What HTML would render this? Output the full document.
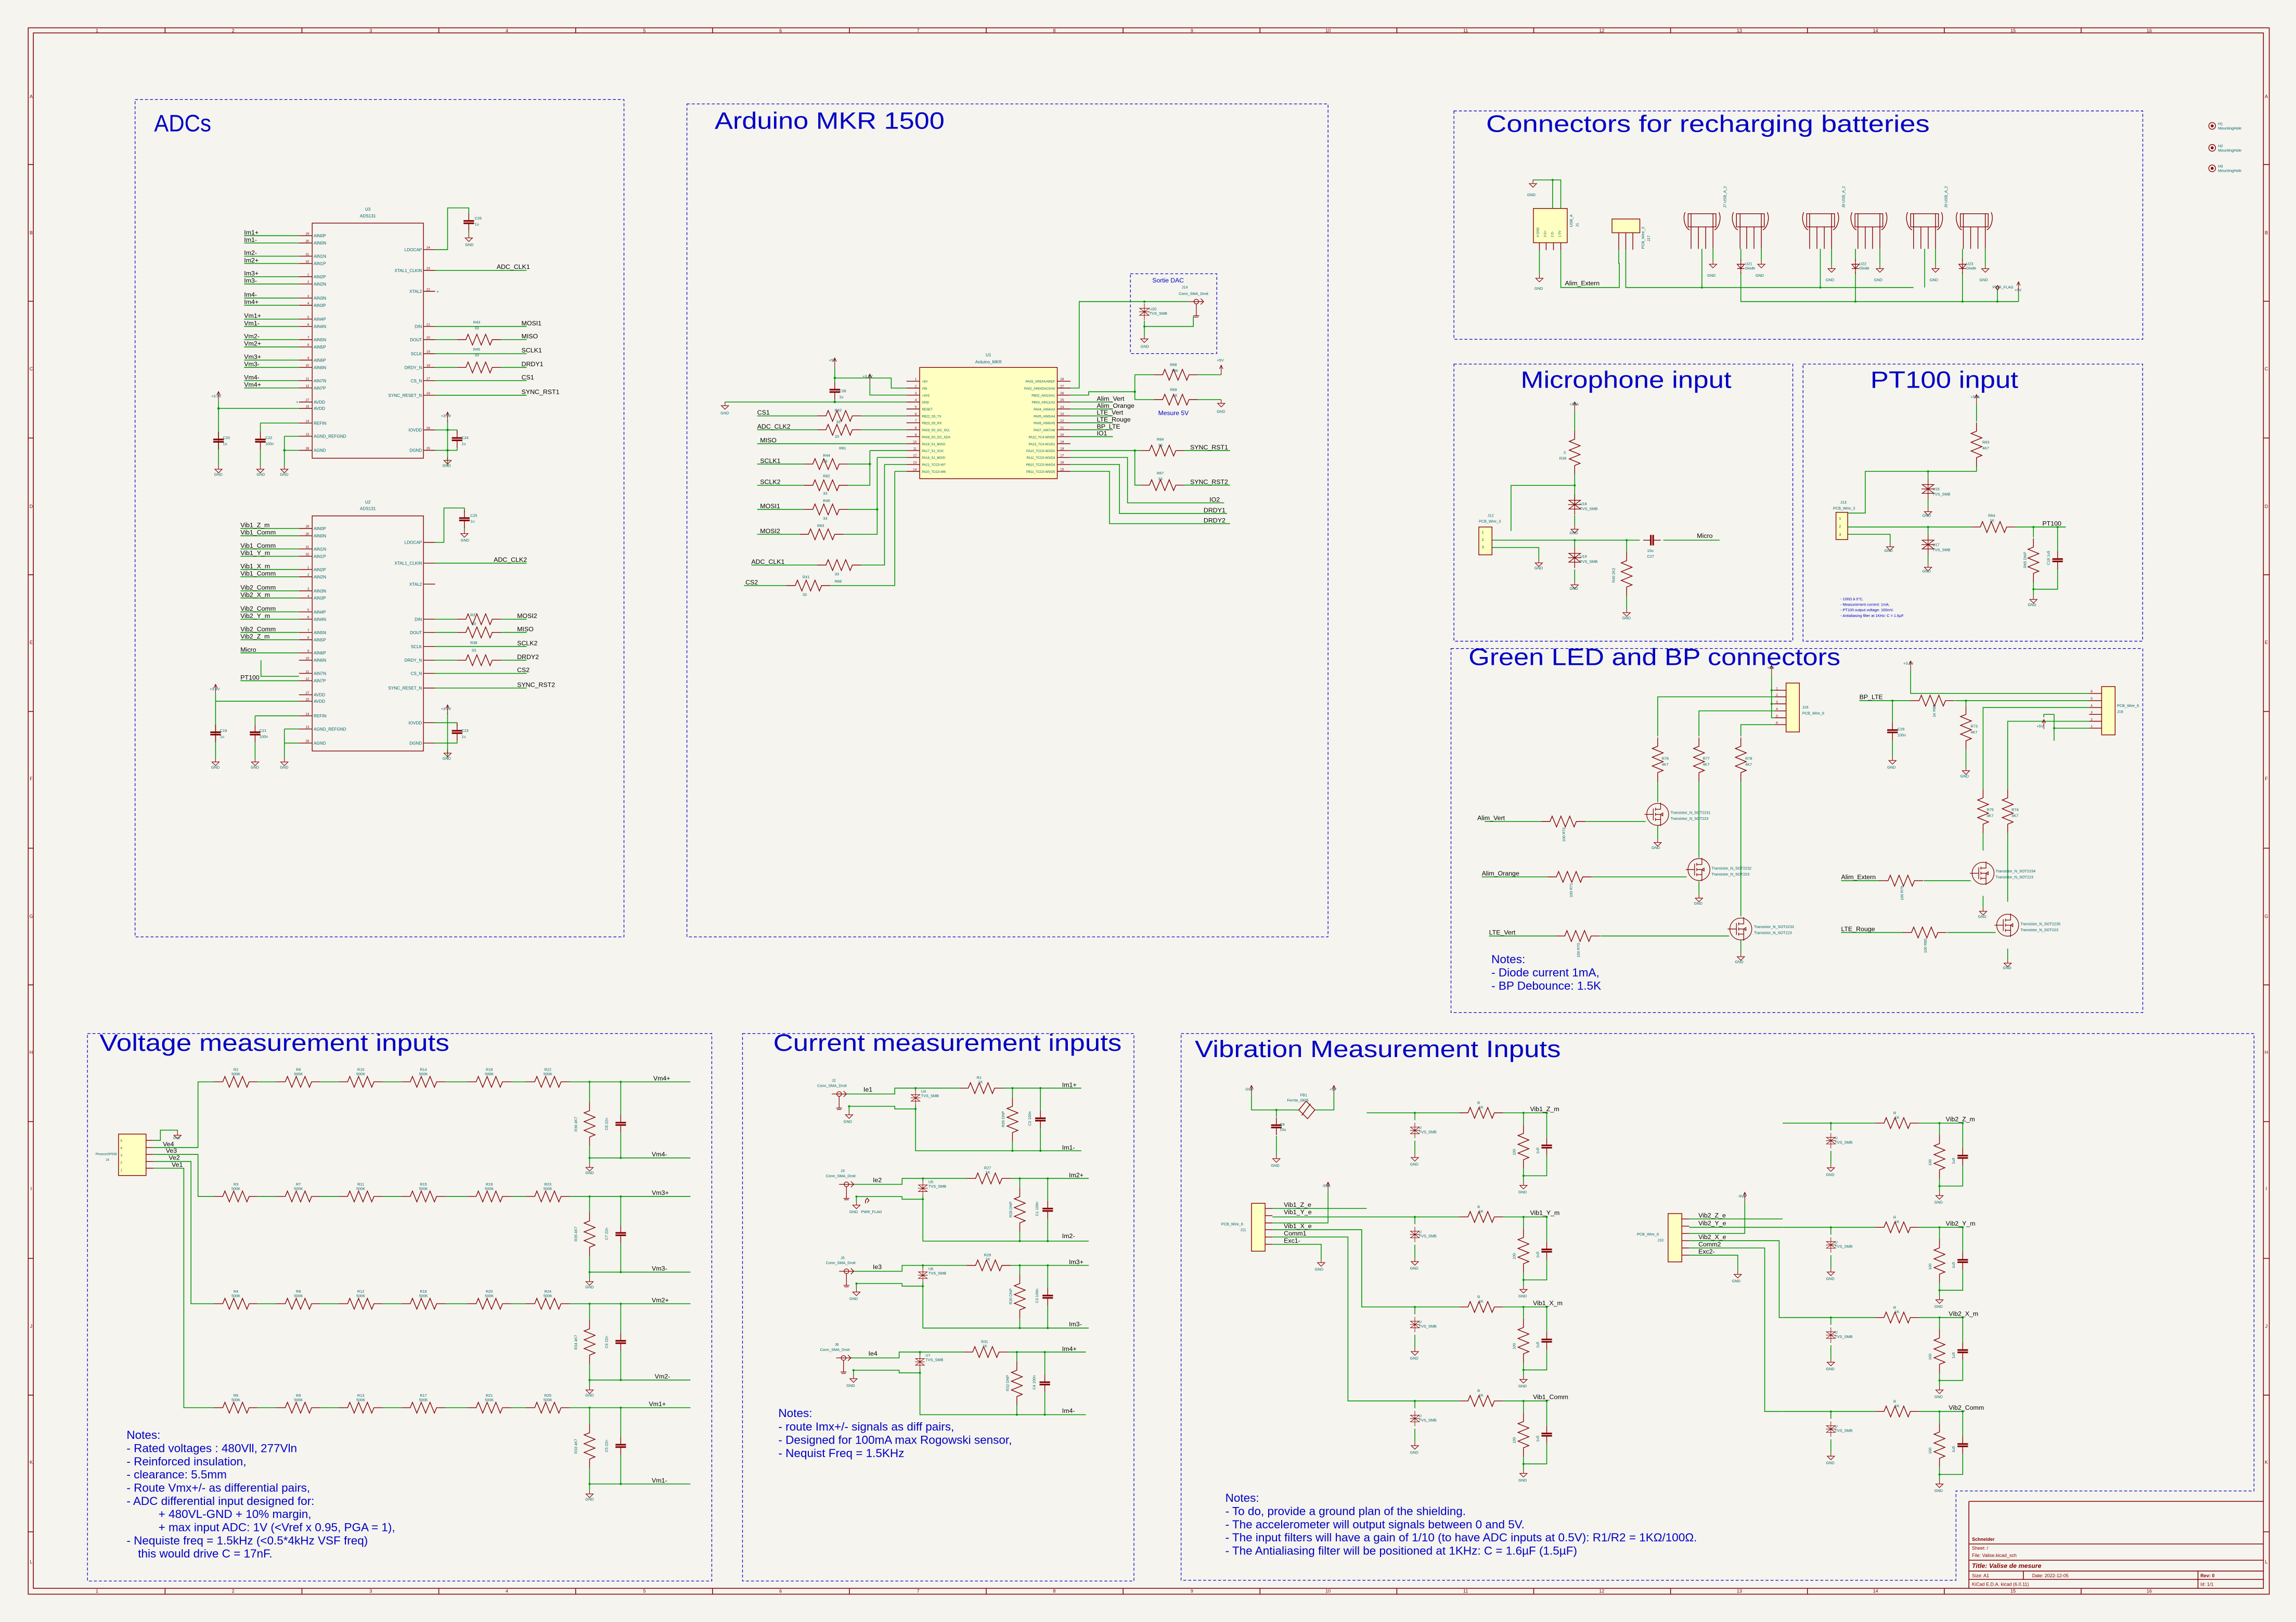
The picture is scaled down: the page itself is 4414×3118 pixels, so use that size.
<!DOCTYPE html>
<html><head><meta charset="utf-8"><style>
html,body{margin:0;padding:0;background:#f5f4ef;}
svg{display:block;}
text{font-family:"Liberation Sans",sans-serif;}
.ti{fill:#0000c4;font-size:16px;}
.no{fill:#0000c4;font-size:8px;}
.n{fill:#000;font-size:4.4px;}
.t{fill:#006464;font-size:2.6px;}
.pn{fill:#006464;font-size:2.9px;}
.pa{fill:#006464;font-size:2.2px;}
.p{fill:#840000;font-size:2.3px;}
.w{stroke:#009600;stroke-width:.55;fill:none;}
.c{stroke:#840000;stroke-width:.5;fill:none;}
.bx{stroke:#840000;stroke-width:.5;fill:#ffffc2;}
.bo{stroke:#840000;stroke-width:.5;fill:none;}
.db{stroke:#0000c4;stroke-width:.45;fill:none;stroke-dasharray:2 1.4;}
.dot{fill:#009600;}
.bd{stroke:#840000;stroke-width:.55;fill:none;}
.bt{fill:#840000;font-size:3.2px;font-family:"Liberation Mono",monospace;}
</style></head><body>
<svg width="4414" height="3118" viewBox="0 0 1568 1108" xmlns="http://www.w3.org/2000/svg">
<defs>
<path id="rh" d="M-15 0h6l1.5-3.7 3 7.4 3-7.4 3 7.4 3-7.4 3 7.4 1.5-3.7h6"/>
<path id="rv" d="M0 -15v6l-3.7 1.5 7.4 3-7.4 3 7.4 3-7.4 3 7.4 3-3.7 1.5v6"/>
<g id="cv"><path d="M0 -6v5.2M0 6v-5.2" stroke="#840000" stroke-width=".5"/><path d="M-3.6 -.8h7.2M-3.6 .8h7.2" stroke="#840000" stroke-width="1.1"/></g>
<g id="ch"><path d="M-6 0h5.2M6 0h-5.2" stroke="#840000" stroke-width=".5"/><path d="M-.8 -3.6v7.2M.8 -3.6v7.2" stroke="#840000" stroke-width="1.1"/></g>
<path id="gnd" d="M0 0v2.5M-2.5 2.5h5L0 5z" stroke="#840000" stroke-width=".4" fill="none"/>
<path id="pwr" d="M0 0v-6M-1.2 -4L0 -6.5 1.2 -4" stroke="#840000" stroke-width=".4" fill="none"/>
<g id="tvs" stroke="#840000" stroke-width=".45" fill="none"><path d="M0 -7v14M-4 -3h8l-4 3zM-4 3h8l-4-3zM-4.5 0h9"/></g>
<g id="dio" stroke="#840000" stroke-width=".45" fill="none"><path d="M0 -5v10M-2.5 -1.5h5l-2.5 3zM-2.5 1.5h5"/></g>
<g id="q" stroke="#840000" stroke-width=".45" fill="none"><circle r="7.5"/><path d="M-3 -4v8M-1.5 -4.5v2M-1.5 -1v2M-1.5 2.5v2M-1.5 -3.5h3.5v-4.5M-1.5 3.5h3.5v4.5M-1.5 0h3.5v3.5M-9 0h6M2 0l1.5 -1 v2z"/></g>
<g id="sma" stroke="#840000" stroke-width=".45" fill="none"><circle r="1.6"/><path d="M-5 0h10M3 -2l2 2-2 2M0 1.6v8M-2 9.6h4M-1.5 10.6h3"/></g>
<g id="vrow">
<path class="w" d="M933.4 0H996.6M1026.6 0H1056.4M966.3 0V5M966.3 19V28M1040.5 0V8M1040.5 38V43H1056.4V29M1056.4 17V0M1040.5 43V47"/>
<use href="#tvs" transform="translate(966.3 12) scale(.75)"/>
<use href="#gnd" x="966.3" y="28"/><use href="#gnd" x="1040.5" y="47"/>
<use href="#rh" x="1011.6" y="0" class="c"/><use href="#rv" x="1040.5" y="23" class="c"/><use href="#cv" x="1056.4" y="23"/>
<g class="dot"><circle cx="966.3" cy="0" r=".7"/><circle cx="1040.5" cy="0" r=".7"/><circle cx="1056.4" cy="0" r=".7"/><circle cx="1040.5" cy="43" r=".7"/></g>
<g class="t" font-size="2.3"><text x="969" y="11">U</text><text x="969" y="14">TVS_SMB</text><text x="963" y="36">GND</text><text x="1037" y="55">GND</text><text x="1009" y="-6">R</text><text x="1010" y="-3">1K</text><text x="1035" y="29" transform="rotate(-90 1035 29)">100</text><text x="1051" y="28" transform="rotate(-90 1051 28)">1u5</text></g>
</g>
<g id="cb1">
<path class="w" d="M578 747.3H611V743.3H655.2M685.2 743.3H738.5M579.8 755.7H611V757.5H625.2V786.1H738.5M579.8 755.7V759M625.2 743.3V745M625.2 755V757.5M691.4 743.3V749.7M691.4 779.7V786.1M710.5 743.3V758.7M710.5 770.7V786.1"/>
<use href="#sma" x="573" y="747.3"/><use href="#gnd" x="579.8" y="759"/>
<use href="#tvs" transform="translate(625.2 750) scale(.75)"/>
<use href="#rh" x="670.2" y="743.3" class="c"/><use href="#rv" x="691.4" y="764.7" class="c"/><use href="#cv" x="710.5" y="764.7"/>
<g class="dot"><circle cx="625.2" cy="743.3" r=".7"/><circle cx="625.2" cy="757.5" r=".7"/><circle cx="691.4" cy="743.3" r=".7"/><circle cx="710.5" cy="743.3" r=".7"/><circle cx="691.4" cy="786.1" r=".7"/><circle cx="710.5" cy="786.1" r=".7"/><circle cx="579.8" cy="755.7" r=".7"/></g>
</g>
</defs>
<rect width="1568" height="1108" fill="#f5f4ef"/>

<!-- border -->
<g class="bd">
<rect x="19" y="19" width="1531" height="1070"/>
<rect x="22.5" y="22.5" width="1523.5" height="1062.5"/>
<path d="M112.5 19v3.5M206 19v3.5M299.5 19v3.5M393 19v3.5M486.5 19v3.5M580 19v3.5M673.5 19v3.5M767 19v3.5M860.5 19v3.5M954 19v3.5M1047.5 19v3.5M1141 19v3.5M1234.5 19v3.5M1328 19v3.5M1421.5 19v3.5
M112.5 1085v4M206 1085v4M299.5 1085v4M393 1085v4M486.5 1085v4M580 1085v4M673.5 1085v4M767 1085v4M860.5 1085v4M954 1085v4M1047.5 1085v4M1141 1085v4M1234.5 1085v4M1328 1085v4M1421.5 1085v4
M19 112.4h3.5M19 205.8h3.5M19 299.2h3.5M19 392.6h3.5M19 486h3.5M19 579.4h3.5M19 672.8h3.5M19 766.2h3.5M19 859.6h3.5M19 953h3.5M19 1046.4h3.5
M1546 112.4h4M1546 205.8h4M1546 299.2h4M1546 392.6h4M1546 486h4M1546 579.4h4M1546 672.8h4M1546 766.2h4M1546 859.6h4M1546 953h4M1546 1046.4h4"/>
</g>
<g class="bt" font-size="2.8" text-anchor="middle">
<text x="66" y="22">1</text><text x="159" y="22">2</text><text x="253" y="22">3</text><text x="346" y="22">4</text><text x="440" y="22">5</text><text x="533" y="22">6</text><text x="627" y="22">7</text><text x="720" y="22">8</text><text x="814" y="22">9</text><text x="907" y="22">10</text><text x="1001" y="22">11</text><text x="1094" y="22">12</text><text x="1188" y="22">13</text><text x="1281" y="22">14</text><text x="1375" y="22">15</text><text x="1468" y="22">16</text>
<text x="66" y="1088">1</text><text x="159" y="1088">2</text><text x="253" y="1088">3</text><text x="346" y="1088">4</text><text x="440" y="1088">5</text><text x="533" y="1088">6</text><text x="627" y="1088">7</text><text x="720" y="1088">8</text><text x="814" y="1088">9</text><text x="907" y="1088">10</text><text x="1001" y="1088">11</text><text x="1094" y="1088">12</text><text x="1188" y="1088">13</text><text x="1281" y="1088">14</text><text x="1375" y="1088">15</text><text x="1468" y="1088">16</text>
<text x="21" y="67">A</text><text x="21" y="160">B</text><text x="21" y="253">C</text><text x="21" y="347">D</text><text x="21" y="440">E</text><text x="21" y="533">F</text><text x="21" y="627">G</text><text x="21" y="720">H</text><text x="21" y="813">I</text><text x="21" y="907">J</text><text x="21" y="1000">K</text><text x="21" y="1068">L</text>
<text x="1548" y="67">A</text><text x="1548" y="160">B</text><text x="1548" y="253">C</text><text x="1548" y="347">D</text><text x="1548" y="440">E</text><text x="1548" y="533">F</text><text x="1548" y="627">G</text><text x="1548" y="720">H</text><text x="1548" y="813">I</text><text x="1548" y="907">J</text><text x="1548" y="1000">K</text><text x="1548" y="1068">L</text>
</g>

<!-- section boxes -->
<g class="db">
<rect x="92" y="68" width="334" height="572"/>
<rect x="469" y="71" width="438" height="569"/>
<rect x="993" y="75.8" width="470.6" height="156"/>
<rect x="993" y="248.7" width="231.5" height="189.3"/>
<rect x="1231.5" y="248.7" width="232" height="189.3"/>
<rect x="991" y="443" width="472.6" height="248.7"/>
<rect x="59.5" y="706" width="426.5" height="374"/>
<rect x="507" y="706" width="267.4" height="374"/>
<path d="M806.6 706H1539.6V1018.5H1336V1079.5H806.6Z"/>
<rect x="772" y="187" width="59" height="54.5"/>
</g>
<text class="ti" x="105" y="89.7" textLength="39" lengthAdjust="spacingAndGlyphs">ADCs</text>
<text class="ti" x="488" y="88" textLength="157" lengthAdjust="spacingAndGlyphs">Arduino MKR 1500</text>
<text class="ti" x="1015" y="90" textLength="303" lengthAdjust="spacingAndGlyphs">Connectors for recharging batteries</text>
<text class="ti" x="1038.6" y="265" textLength="144" lengthAdjust="spacingAndGlyphs">Microphone input</text>
<text class="ti" x="1277.5" y="265" textLength="101" lengthAdjust="spacingAndGlyphs">PT100 input</text>
<text class="ti" x="1003" y="454.4" textLength="254" lengthAdjust="spacingAndGlyphs">Green LED and BP connectors</text>
<text class="ti" x="67.7" y="717.8" textLength="239" lengthAdjust="spacingAndGlyphs">Voltage measurement inputs</text>
<text class="ti" x="528" y="717.8" textLength="238" lengthAdjust="spacingAndGlyphs">Current measurement inputs</text>
<text class="ti" x="816" y="722" textLength="250" lengthAdjust="spacingAndGlyphs">Vibration Measurement Inputs</text>

<!-- ================= ADCs U3 ================= -->
<g>
<rect class="bo" x="213" y="152.4" width="76" height="160.6"/>
<text class="pn" x="251" y="144" text-anchor="middle">U3</text><text class="pn" x="251" y="148.5" text-anchor="middle">ADS131</text>
<path class="w" d="M166.5 161H204M166.5 166H204M166.5 175H204M166.5 180H204M166.5 189H204M166.5 194H204M166.5 203.6H204M166.5 208.5H204M166.5 218H204M166.5 223H204M166.5 232H204M166.5 237H204M166.5 246H204M166.5 251H204M166.5 260H204M166.5 265H204"/>
<path class="c" d="M204 161h9M204 166h9M204 175h9M204 180h9M204 189h9M204 194h9M204 203.6h9M204 208.5h9M204 218h9M204 223h9M204 232h9M204 237h9M204 246h9M204 251h9M204 260h9M204 265h9M204 274.6h9M204 279h9M204 289h9M204 298h9M204 307.6h9
M289 170.5h8M289 184.7h8M289 199h8M289 223h8M289 232h8M289 241.6h8M289 251h8M289 260h8M289 270h8M289 293.7h8M289 307.6h8"/>
<g class="n"><text x="166.5" y="160.2">Im1+</text><text x="166.5" y="165.2">Im1-</text><text x="166.5" y="174.2">Im2-</text><text x="166.5" y="179.2">Im2+</text><text x="166.5" y="188.2">Im3+</text><text x="166.5" y="193.2">Im3-</text><text x="166.5" y="202.8">Im4-</text><text x="166.5" y="207.7">Im4+</text><text x="166.5" y="217.2">Vm1+</text><text x="166.5" y="222.2">Vm1-</text><text x="166.5" y="231.2">Vm2-</text><text x="166.5" y="236.2">Vm2+</text><text x="166.5" y="245.2">Vm3+</text><text x="166.5" y="250.2">Vm3-</text><text x="166.5" y="259.2">Vm4-</text><text x="166.5" y="264.2">Vm4+</text></g>
<g class="p" text-anchor="end"><text x="211" y="160.4">29</text><text x="211" y="165.4">30</text><text x="211" y="174.4">31</text><text x="211" y="179.4">32</text><text x="211" y="188.4">1</text><text x="211" y="193.4">2</text><text x="211" y="203">3</text><text x="211" y="207.9">4</text><text x="211" y="217.4">5</text><text x="211" y="222.4">6</text><text x="211" y="231.4">7</text><text x="211" y="236.4">8</text><text x="211" y="245.4">9</text><text x="211" y="250.4">10</text><text x="211" y="259.4">11</text><text x="211" y="264.4">12</text><text x="211" y="274">27</text><text x="211" y="278.4">15</text><text x="211" y="288.4">14</text><text x="211" y="297.4">13</text><text x="211" y="307">28</text></g>
<g class="p"><text x="291" y="169.9">24</text><text x="291" y="184.1">23</text><text x="291" y="198.4">22</text><text x="291" y="222.4">21</text><text x="291" y="231.4">20</text><text x="291" y="241">19</text><text x="291" y="250.4">18</text><text x="291" y="259.4">17</text><text x="291" y="269.4">16</text><text x="291" y="293.1">26</text><text x="291" y="307">25</text></g>
<g class="pn"><text x="214" y="162.1">AIN0P</text><text x="214" y="167.1">AIN0N</text><text x="214" y="176.1">AIN1N</text><text x="214" y="181.1">AIN1P</text><text x="214" y="190.1">AIN2P</text><text x="214" y="195.1">AIN2N</text><text x="214" y="204.7">AIN3N</text><text x="214" y="209.6">AIN3P</text><text x="214" y="219.1">AIN4P</text><text x="214" y="224.1">AIN4N</text><text x="214" y="233.1">AIN5N</text><text x="214" y="238.1">AIN5P</text><text x="214" y="247.1">AIN6P</text><text x="214" y="252.1">AIN6N</text><text x="214" y="261.1">AIN7N</text><text x="214" y="266.1">AIN7P</text><text x="214" y="275.7">AVDD</text><text x="214" y="280.1">AVDD</text><text x="214" y="290.1">REFIN</text><text x="214" y="299.1">AGND_REFGND</text><text x="214" y="308.7">AGND</text></g>
<g class="pn" text-anchor="end"><text x="288" y="171.6">LDOCAP</text><text x="288" y="185.8">XTAL1_CLKIN</text><text x="288" y="200.1">XTAL2</text><text x="288" y="224.1">DIN</text><text x="288" y="233.1">DOUT</text><text x="288" y="242.7">SCLK</text><text x="288" y="252.1">DRDY_N</text><text x="288" y="261.1">CS_N</text><text x="288" y="271.1">SYNC_RESET_N</text><text x="288" y="294.8">IOVDD</text><text x="288" y="308.7">DGND</text></g>
<path class="w" d="M297 170.5H305.5V142H320V146M320 157.7V160M297 184.7H359.5M297 223H359.5M297 232H312M342 232H359.5M297 241.6H359.5M297 251H312M342 251H359.5M297 260H359.5M297 270H359.5
M149 274V318M149 279H204M177.6 289H204M177.6 289V295M177.6 307V318M194 298H204M194 298V318M194 307.6H204M305.5 287V318M297 293.7H312M297 307.6H305.5M305.5 293.7H312V296M312 306V307.6H305.5"/>
<use href="#cv" x="320" y="151.7"/><use href="#gnd" x="320" y="160"/>
<g class="c"><use href="#rh" x="327" y="232"/><use href="#rh" x="327" y="251"/></g>
<use href="#cv" x="149" y="301"/><use href="#cv" x="177.6" y="301"/><use href="#cv" x="312" y="300"/>
<use href="#gnd" x="149" y="318"/><use href="#gnd" x="177.6" y="318"/><use href="#gnd" x="194" y="318"/><use href="#gnd" x="305.5" y="312"/>
<use href="#pwr" x="149" y="274"/><use href="#pwr" x="305.5" y="288"/>
<circle class="dot" cx="149" cy="279" r=".8"/><circle class="dot" cx="194" cy="307.6" r=".8"/><circle class="dot" cx="305.5" cy="293.7" r=".8"/><circle class="dot" cx="305.5" cy="307.6" r=".8"/>
<g class="n"><text x="339" y="183.8">ADC_CLK1</text><text x="356" y="222.2">MOSI1</text><text x="356" y="231.2">MISO</text><text x="356" y="240.8">SCLK1</text><text x="356" y="250.2">DRDY1</text><text x="356" y="259.2">CS1</text><text x="356" y="269.2">SYNC_RST1</text></g>
<g class="t"><text x="324" y="150">C26</text><text x="324" y="154">1u</text><text x="323" y="221">R43</text><text x="324" y="225">33</text><text x="323" y="239.5">R45</text><text x="324" y="243.5">33</text><text x="144" y="271.5">+3.3V</text><text x="152" y="300">C20</text><text x="152" y="304">1u</text><text x="181" y="300">C22</text><text x="181" y="304">100n</text><text x="315" y="300">C24</text><text x="315" y="304">1u</text><text x="301" y="285">+3.3V</text><text x="317.5" y="168">GND</text><text x="146" y="325">GND</text><text x="175" y="325">GND</text><text x="191" y="325">GND</text><text x="302" y="319">GND</text></g>
<text class="t" x="202" y="275.5" fill="#0000c4">×</text><text class="t" x="298" y="200">×</text>
</g>

<!-- ================= ADCs U2 ================= -->
<g transform="translate(0,200)">
<rect class="bo" x="213" y="152.4" width="76" height="160.6"/>
<text class="pn" x="251" y="144" text-anchor="middle">U2</text><text class="pn" x="251" y="148.5" text-anchor="middle">ADS131</text>
<path class="w" d="M164 161H204M164 166H204M164 175H204M164 180H204M164 189H204M164 194H204M164 203.6H204M164 208.5H204M164 218H204M164 223H204M164 232H204M164 237H204M164 246H204M164 265H204M178 251V262H204"/>
<path class="c" d="M204 161h9M204 166h9M204 175h9M204 180h9M204 189h9M204 194h9M204 203.6h9M204 208.5h9M204 218h9M204 223h9M204 232h9M204 237h9M204 246h9M204 251h9M204 260h9M204 265h9M204 274.6h9M204 279h9M204 289h9M204 298h9M204 307.6h9
M289 170.5h8M289 184.7h8M289 199h8M289 223h8M289 232h8M289 241.6h8M289 251h8M289 260h8M289 270h8M289 293.7h8M289 307.6h8"/>
<g class="n"><text x="164" y="160.2">Vib1_Z_m</text><text x="164" y="165.2">Vib1_Comm</text><text x="164" y="174.2">Vib1_Comm</text><text x="164" y="179.2">Vib1_Y_m</text><text x="164" y="188.2">Vib1_X_m</text><text x="164" y="193.2">Vib1_Comm</text><text x="164" y="202.8">Vib2_Comm</text><text x="164" y="207.7">Vib2_X_m</text><text x="164" y="217.2">Vib2_Comm</text><text x="164" y="222.2">Vib2_Y_m</text><text x="164" y="231.2">Vib2_Comm</text><text x="164" y="236.2">Vib2_Z_m</text><text x="164" y="245.2">Micro</text><text x="164" y="264.2">PT100</text></g>
<g class="p" text-anchor="end"><text x="211" y="160.4">29</text><text x="211" y="165.4">30</text><text x="211" y="174.4">31</text><text x="211" y="179.4">32</text><text x="211" y="188.4">1</text><text x="211" y="193.4">2</text><text x="211" y="203">3</text><text x="211" y="207.9">4</text><text x="211" y="217.4">5</text><text x="211" y="222.4">6</text><text x="211" y="231.4">7</text><text x="211" y="236.4">8</text><text x="211" y="245.4">9</text><text x="211" y="250.4">10</text><text x="211" y="259.4">11</text><text x="211" y="264.4">12</text><text x="211" y="274">27</text><text x="211" y="278.4">15</text><text x="211" y="288.4">14</text><text x="211" y="297.4">13</text><text x="211" y="307">28</text></g>
<g class="pn"><text x="214" y="162.1">AIN0P</text><text x="214" y="167.1">AIN0N</text><text x="214" y="176.1">AIN1N</text><text x="214" y="181.1">AIN1P</text><text x="214" y="190.1">AIN2P</text><text x="214" y="195.1">AIN2N</text><text x="214" y="204.7">AIN3N</text><text x="214" y="209.6">AIN3P</text><text x="214" y="219.1">AIN4P</text><text x="214" y="224.1">AIN4N</text><text x="214" y="233.1">AIN5N</text><text x="214" y="238.1">AIN5P</text><text x="214" y="247.1">AIN6P</text><text x="214" y="252.1">AIN6N</text><text x="214" y="261.1">AIN7N</text><text x="214" y="266.1">AIN7P</text><text x="214" y="275.7">AVDD</text><text x="214" y="280.1">AVDD</text><text x="214" y="290.1">REFIN</text><text x="214" y="299.1">AGND_REFGND</text><text x="214" y="308.7">AGND</text></g>
<g class="pn" text-anchor="end"><text x="288" y="171.6">LDOCAP</text><text x="288" y="185.8">XTAL1_CLKIN</text><text x="288" y="200.1">XTAL2</text><text x="288" y="224.1">DIN</text><text x="288" y="233.1">DOUT</text><text x="288" y="242.7">SCLK</text><text x="288" y="252.1">DRDY_N</text><text x="288" y="261.1">CS_N</text><text x="288" y="271.1">SYNC_RESET_N</text><text x="288" y="294.8">IOVDD</text><text x="288" y="308.7">DGND</text></g>
<path class="w" d="M297 170.5H303V147H317V150M317 160V162M297 184.7H359.5M297 223H312M342 223H359.5M297 232H312M342 232H359.5M297 241.6H359.5M297 251H312M342 251H359.5M297 260H359.5M297 270H359.5
M147 274V318M147 279H204M174 289H204M174 289V295M174 307V318M194 298H204M194 298V318M194 307.6H204M305.5 287V318M297 293.7H312M297 307.6H305.5M305.5 293.7H312V296M312 306V307.6H305.5"/>
<use href="#cv" x="317" y="154.7"/><use href="#gnd" x="317" y="162"/>
<g class="c"><use href="#rh" x="327" y="223"/><use href="#rh" x="327" y="232"/><use href="#rh" x="327" y="251"/></g>
<use href="#cv" x="147" y="301"/><use href="#cv" x="174" y="301"/><use href="#cv" x="312" y="300"/>
<use href="#gnd" x="147" y="318"/><use href="#gnd" x="174" y="318"/><use href="#gnd" x="194" y="318"/><use href="#gnd" x="305.5" y="312"/>
<use href="#pwr" x="147" y="274"/><use href="#pwr" x="305.5" y="288"/>
<g class="n"><text x="337" y="183.8">ADC_CLK2</text><text x="353" y="222.2">MOSI2</text><text x="353" y="231.2">MISO</text><text x="353" y="240.8">SCLK2</text><text x="353" y="250.2">DRDY2</text><text x="353" y="259.2">CS2</text><text x="353" y="269.2">SYNC_RST2</text></g>
<g class="t"><text x="321" y="153">C25</text><text x="321" y="157">1u</text><text x="321" y="221">R37</text><text x="322" y="227">33</text><text x="321" y="240">R38</text><text x="322" y="245">33</text><text x="143" y="271.5">+3.3V</text><text x="150" y="300">C19</text><text x="150" y="304">1u</text><text x="177" y="300">C21</text><text x="177" y="304">100n</text><text x="315" y="300">C23</text><text x="315" y="304">1u</text><text x="301" y="285">+3.3V</text><text x="314.5" y="170">GND</text><text x="144" y="325">GND</text><text x="171" y="325">GND</text><text x="191" y="325">GND</text><text x="302" y="319">GND</text></g>
</g>

<!-- ================= Arduino ================= -->
<g>
<rect class="bx" x="628" y="251" width="94" height="76"/>
<text class="pn" x="675" y="243.5" text-anchor="middle">U1</text><text class="pn" x="675" y="248.3" text-anchor="middle">Arduino_MKR</text>
<path class="c" d="M619 260.4h9M619 265.1h9M619 269.9h9M619 274.6h9M619 279.4h9M619 284.1h9M619 288.8h9M619 293.6h9M619 298.3h9M619 303.1h9M619 307.8h9M619 312.5h9M619 317.3h9M619 322h9
M722 260.4h9M722 265.1h9M722 269.9h9M722 274.6h9M722 279.4h9M722 284.1h9M722 288.8h9M722 293.6h9M722 298.3h9M722 303.1h9M722 307.8h9M722 312.5h9M722 317.3h9M722 322h9"/>
<g class="pa"><text x="629.5" y="261.4">+5V</text><text x="629.5" y="266.1">VIN</text><text x="629.5" y="270.9">+3V3</text><text x="629.5" y="275.6">GND</text><text x="629.5" y="280.4">RESET</text><text x="629.5" y="285.1">PB22_S5_TX</text><text x="629.5" y="289.8">PB23_S5_RX</text><text x="629.5" y="294.6">PA09_S0_I2C_SCL</text><text x="629.5" y="299.3">PA08_S0_I2C_SDA</text><text x="629.5" y="304.1">PA19_S1_MISO</text><text x="629.5" y="308.8">PA17_S1_SCK</text><text x="629.5" y="313.5">PA16_S1_MOSI</text><text x="629.5" y="318.3">PA21_TCC0-W7</text><text x="629.5" y="323">PA20_TCC0-W6</text></g>
<g class="pa" text-anchor="end"><text x="720.5" y="261.4">PA03_VREFA/AREF</text><text x="720.5" y="266.1">PA02_AIN0/DAC0/A0</text><text x="720.5" y="270.9">PB02_AIN10/A1</text><text x="720.5" y="275.6">PB03_AIN11/A2</text><text x="720.5" y="280.4">PA04_AIN4/A3</text><text x="720.5" y="285.1">PA05_AIN5/A4</text><text x="720.5" y="289.8">PA06_AIN6/A5</text><text x="720.5" y="294.6">PA07_AIN7/A6</text><text x="720.5" y="299.3">PA22_TC4-W0/D0</text><text x="720.5" y="304.1">PA23_TC4-W1/D1</text><text x="720.5" y="308.8">PA10_TCC0-W2/D2</text><text x="720.5" y="313.5">PA11_TCC0-W3/D3</text><text x="720.5" y="318.3">PB10_TCC0-W4/D4</text><text x="720.5" y="323">PB11_TCC0-W5/D5</text></g>
<g class="p" text-anchor="end"><text x="626" y="259.8">1</text><text x="626" y="264.5">2</text><text x="626" y="269.3">3</text><text x="626" y="274">4</text><text x="626" y="278.8">5</text><text x="626" y="283.5">6</text><text x="626" y="288.2">7</text><text x="626" y="293">8</text><text x="626" y="297.7">9</text><text x="626" y="302.5">10</text><text x="626" y="307.2">11</text><text x="626" y="311.9">12</text><text x="626" y="316.7">13</text><text x="626" y="321.4">14</text></g>
<g class="p"><text x="724" y="259.8">28</text><text x="724" y="264.5">27</text><text x="724" y="269.3">26</text><text x="724" y="274">25</text><text x="724" y="278.8">24</text><text x="724" y="283.5">23</text><text x="724" y="288.2">22</text><text x="724" y="293">21</text><text x="724" y="297.7">20</text><text x="724" y="302.5">19</text><text x="724" y="307.2">18</text><text x="724" y="311.9">17</text><text x="724" y="316.7">16</text><text x="724" y="321.4">15</text></g>
<path class="w" d="M570 251V258.2H608.6V265.1H619M594 262V269.9H619M495 274.6H619M570 258.2V261M570 273V274.6
M517 284.1H558M588 284.1H619M517 293.6H558M588 293.6H619M517 303.1H619
M517 317H549M579 317H594M594 307.8H619M594 307.8V331.5H579M517 331.5H549
M599 312.5H619M599 312.5V365H576M517 348H549M579 348H599M517 365H546
M604 317.3H619M604 317.3V386H588M513 386H558
M611 322H619M611 322V400H567M508 400H537
M731 265.1H737V206H812M731 269.9H743.5V267.6H775M775 256V273M775 256H788M818 256H834M775 273H788M818 273H834
M731 274.6H760M731 279.4H760M731 284.1H760M731 288.8H760M731 293.6H760M731 298.3H760
M731 307.8H779M809 307.8H840M775 307.8V331.4H779M809 331.4H840
M731 312.5H770V343.5H836M731 317.3H764.5V350.8H838M731 322H757.7V357.7H840"/>
<use href="#cv" x="570" y="267"/><use href="#pwr" x="570" y="251"/><use href="#pwr" x="594" y="262"/><use href="#gnd" x="495" y="274.6"/>
<g class="c"><use href="#rh" x="573" y="284.1"/><use href="#rh" x="573" y="293.6"/><use href="#rh" x="564" y="317"/><use href="#rh" x="564" y="331.5"/><use href="#rh" x="564" y="348"/><use href="#rh" x="561" y="365"/><use href="#rh" x="573" y="386"/><use href="#rh" x="552" y="400"/><use href="#rh" x="803" y="256"/><use href="#rh" x="803" y="273"/><use href="#rh" x="794" y="307.8"/><use href="#rh" x="794" y="331.4"/></g>
<use href="#pwr" x="834" y="256"/><use href="#gnd" x="834" y="273"/>
<circle class="dot" cx="570" cy="258.2" r=".8"/><circle class="dot" cx="570" cy="274.6" r=".8"/><circle class="dot" cx="594" cy="317" r=".8"/><circle class="dot" cx="599" cy="348" r=".8"/><circle class="dot" cx="775" cy="267.6" r=".8"/><circle class="dot" cx="775" cy="307.8" r=".8"/>
<g class="n"><text x="517" y="283.3">CS1</text><text x="517" y="292.8">ADC_CLK2</text><text x="519" y="302.3">MISO</text><text x="519" y="316.2">SCLK1</text><text x="519" y="330.7">SCLK2</text><text x="519" y="347.2">MOSI1</text><text x="519" y="364.2">MOSI2</text><text x="513" y="385.2">ADC_CLK1</text><text x="509" y="399.2">CS2</text>
<text x="749" y="273.8">Alim_Vert</text><text x="749" y="278.6">Alim_Orange</text><text x="749" y="283.3">LTE_Vert</text><text x="749" y="288">LTE_Rouge</text><text x="749" y="292.8">BP_LTE</text><text x="749" y="297.5">IO1</text>
<text x="812.8" y="307">SYNC_RST1</text><text x="812.8" y="330.6">SYNC_RST2</text><text x="826" y="342.7">IO2</text><text x="822" y="350">DRDY1</text><text x="822" y="356.9">DRDY2</text></g>
<text x="791" y="283.5" fill="#0000c4" font-size="4.3">Mesure 5V</text>
<text x="787" y="193" fill="#0000c4" font-size="4.3">Sortie DAC</text>
<g class="t"><text x="566" y="247">+5V</text><text x="589" y="258">+3.3V</text><text x="573" y="268">C28</text><text x="573" y="272">1u</text><text x="492" y="283">GND</text><text x="570" y="281">R42</text><text x="571" y="289">33</text><text x="570" y="299">33</text><text x="573" y="307">R81</text><text x="562" y="312">R44</text><text x="562" y="316">33</text><text x="562" y="326">R82</text><text x="562" y="338">33</text><text x="562" y="343">R46</text><text x="562" y="355">33</text><text x="558" y="360">R83</text><text x="570" y="393">33</text><text x="548" y="395">R41</text><text x="548" y="407">33</text><text x="570" y="398">R66</text>
<text x="799" y="250">R68</text><text x="800" y="254">10K</text><text x="799" y="267">R69</text><text x="801" y="271">1K</text><text x="831" y="247">+5V</text><text x="831" y="282">GND</text><text x="790" y="301">R84</text><text x="791" y="305">33</text><text x="790" y="324">R67</text><text x="791" y="328">33</text>
<text x="807" y="197">J14</text><text x="805" y="201.5">Conn_SMA_Droit</text><text x="785" y="212">U20</text><text x="785" y="215">TVS_SMB</text><text x="779" y="237.5">GND</text></g>
<use href="#sma" x="817" y="206"/>
<use href="#tvs" transform="translate(781.5 213) scale(.8)"/>
<path class="w" d="M781.5 206V207M781.5 219V223H815V216M781.5 223V229"/>
<circle class="dot" cx="781.5" cy="206" r=".7"/><circle class="dot" cx="781.5" cy="223" r=".7"/>
<use href="#gnd" x="781.5" y="229"/>
</g>

<!-- ================= Connectors ================= -->
<g>
<path class="w" d="M1047 122.9H1060.4V142.4M1060.4 122.9H1066V142.4M1051.4 170.9V187.6M1066 170.9V196.4H1106V180H1105.6V170.6M1110.4 170.6V196.4H1307M1162.4 170V196.4M1243.3 170V196.4M1314.6 170V196.4
M1189 170V178M1189 186V206H1378.7M1267.3 170V178M1267.3 186V206M1340.4 170V178M1340.4 186V206M1364.3 198V206M1378.7 199V206"/>
<rect class="bx" x="1047.3" y="142.4" width="23.1" height="23.4"/>
<path class="c" d="M1051.4 165.8v5.1M1056 165.8v5.1M1061 165.8v5.1M1066 165.8v5.1"/>
<rect class="bx" x="1101" y="149.6" width="19" height="9.4"/>
<path class="c" d="M1105.6 159v11.6M1110.4 159v11.6M1115.2 159v11.6"/>
<use href="#gnd" x="1047" y="122.9"/><use href="#gnd" x="1051.4" y="187.6"/>
<g class="t"><text x="1043" y="134">GND</text><text x="1048" y="198">GND</text><text x="1074" y="155" transform="rotate(-90 1074 155)">USB_A</text><text x="1078" y="155" transform="rotate(-90 1078 155)">J1</text><text x="1123" y="170" transform="rotate(-90 1123 170)">PCB_Wire_3</text><text x="1127" y="165" transform="rotate(-90 1127 165)">J17</text><text x="1361" y="197">PWR_FLAG</text><text x="1376" y="199">+5V</text></g>
<text class="pa" x="1051" y="162" transform="rotate(-90 1051 162)">4 GND</text><text class="pa" x="1056" y="162" transform="rotate(-90 1056 162)">3 D+</text><text class="pa" x="1061" y="162" transform="rotate(-90 1061 162)">2 D-</text><text class="pa" x="1066" y="162" transform="rotate(-90 1066 162)">1 5V</text>
<text class="n" x="1068.8" y="195" font-size="4">Alim_Extern</text>
<circle class="dot" cx="1060.4" cy="122.9" r=".7"/><circle class="dot" cx="1162.4" cy="196.4" r=".7"/><circle class="dot" cx="1243.3" cy="196.4" r=".7"/><circle class="dot" cx="1267.3" cy="206" r=".7"/><circle class="dot" cx="1340.4" cy="206" r=".7"/><circle class="dot" cx="1364.3" cy="206" r=".7"/>
<path class="c" d="M1364.3 198l-1.2-1.5 1.2-1.5 1.2 1.5z"/><use href="#pwr" x="1378.7" y="199"/>
<g class="c">
<path d="M1153 146h19v9h-19zM1155 146v24M1160 155v15M1165 155v15M1170 146v24M1151 145c-2 4 0 11 3 12M1174 145c2 4 0 11-3 12"/>
<path d="M1186 146h19v9h-19zM1188.5 146v24M1193 155v15M1198 155v15M1203 146v24M1184 145c-2 4 0 11 3 12M1207 145c2 4 0 11-3 12"/>
<path d="M1234 146h19v9h-19zM1236 146v24M1241 155v15M1246 155v15M1251 146v24M1232 145c-2 4 0 11 3 12M1255 145c2 4 0 11-3 12"/>
<path d="M1267 146h19v9h-19zM1269 146v24M1274 155v15M1279 155v15M1284 146v24M1265 145c-2 4 0 11 3 12M1288 145c2 4 0 11-3 12"/>
<path d="M1305 146h19v9h-19zM1307 146v24M1312 155v15M1317 155v15M1322 146v24M1303 145c-2 4 0 11 3 12M1326 145c2 4 0 11-3 12"/>
<path d="M1339 146h19v9h-19zM1341 146v24M1346 155v15M1351 155v15M1356 146v24M1337 145c-2 4 0 11 3 12M1360 145c2 4 0 11-3 12"/>
</g>
<path class="w" d="M1170 170V178M1203 170V178M1251 170V181M1284 170V181M1322 170V181M1356 170V181"/>
<use href="#gnd" x="1170" y="178"/><use href="#gnd" x="1203" y="178"/><use href="#gnd" x="1251" y="181"/><use href="#gnd" x="1284" y="181"/><use href="#gnd" x="1322" y="181"/><use href="#gnd" x="1356" y="181"/>
<use href="#dio" x="1189" y="182"/><use href="#dio" x="1267.3" y="182"/><use href="#dio" x="1340.4" y="182"/>
<g class="t"><text x="1179" y="142" transform="rotate(-90 1179 142)">J7 USB_A_2</text><text x="1260" y="142" transform="rotate(-90 1260 142)">J8 USB_A_2</text><text x="1330" y="142" transform="rotate(-90 1330 142)">J9 USB_A_2</text><text x="1192" y="181">U21</text><text x="1192" y="184">Diode</text><text x="1270" y="181">U22</text><text x="1270" y="184">Diode</text><text x="1343" y="181">U23</text><text x="1343" y="184">Diode</text><text x="1166" y="189">GND</text><text x="1199" y="189">GND</text><text x="1247" y="192">GND</text><text x="1280" y="192">GND</text><text x="1318" y="192">GND</text><text x="1352" y="192">GND</text></g>
</g>
<g class="c" stroke-width=".6"><circle cx="1511" cy="86" r="2.3"/><circle cx="1511" cy="101" r="2.3"/><circle cx="1511" cy="115" r="2.3"/></g>
<g fill="#840000"><circle cx="1511" cy="86" r="1"/><circle cx="1511" cy="101" r="1"/><circle cx="1511" cy="115" r="1"/></g>
<g class="t" font-size="2.2"><text x="1515" y="85.5">H1</text><text x="1515" y="88.5">MountingHole</text><text x="1515" y="100.5">H2</text><text x="1515" y="103.5">MountingHole</text><text x="1515" y="114.5">H3</text><text x="1515" y="117.5">MountingHole</text></g>

<!-- ================= Microphone ================= -->
<g>
<path class="w" d="M1075.5 281V294M1075.5 324V344M1032 362.7V331.6H1075.5M1019 369H1120M1136 369H1174.5M1075.5 352V359M1075.5 369V374M1075.5 389V397M1111 369V377M1111 407V416M1019 374H1051V382"/>
<use href="#pwr" x="1075.5" y="281"/><use href="#rv" x="1075.5" y="309" class="c"/>
<use href="#tvs" x="1075.5" y="344.7"/><use href="#tvs" x="1075.5" y="381"/>
<use href="#gnd" x="1075.5" y="359"/><use href="#gnd" x="1075.5" y="397"/><use href="#gnd" x="1111" y="416"/><use href="#gnd" x="1051" y="382"/>
<use href="#rv" x="1111" y="392" class="c"/><use href="#ch" x="1128.3" y="369"/>
<rect class="bx" x="1010" y="360" width="9" height="19"/>
<circle class="dot" cx="1075.5" cy="331.6" r=".7"/><circle class="dot" cx="1075.5" cy="369" r=".7"/><circle class="dot" cx="1111" cy="369" r=".7"/>
<text class="n" x="1159" y="367.5">Micro</text>
<g class="t"><text x="1072" y="277">+5VA</text><text x="1068" y="310">0</text><text x="1065" y="314">R39</text><text x="1079" y="345">U18</text><text x="1079" y="348.5">TVS_SMB</text><text x="1079" y="381">U19</text><text x="1079" y="384.5">TVS_SMB</text><text x="1072" y="365">GND</text><text x="1072" y="403">GND</text><text x="1108" y="423">GND</text><text x="1048" y="389">GND</text><text x="1016" y="353">J12</text><text x="1010" y="357">PCB_Wire_3</text><text x="1125" y="377">10u</text><text x="1125" y="381">C27</text><text x="1103" y="398" transform="rotate(-90 1103 398)">R40 2K2</text><text x="1012" y="364.5">1</text><text x="1012" y="369.5">2</text><text x="1012" y="374.5">3</text></g>
</g>

<!-- ================= PT100 ================= -->
<g>
<path class="w" d="M1350 276V288M1350 318V322H1274V350.5H1262M1316.9 322V327M1316.9 341V347M1262 360H1346.6M1376.6 360H1411M1316.9 360V365M1316.9 379V385M1262 365H1291V371M1388.9 360V367M1388.9 397V402.5H1405.4V388M1405.4 377V360M1388.9 402.5V407"/>
<use href="#pwr" x="1350" y="276"/><use href="#rv" x="1350" y="303.6" class="c"/>
<use href="#tvs" x="1316.9" y="334"/><use href="#tvs" x="1316.9" y="372"/>
<use href="#rh" x="1361.6" y="360" class="c"/><use href="#rv" x="1388.9" y="382.7" class="c"/><use href="#cv" x="1405.4" y="382.7"/>
<use href="#gnd" x="1316.9" y="347"/><use href="#gnd" x="1316.9" y="385"/><use href="#gnd" x="1291" y="371"/><use href="#gnd" x="1388.9" y="407"/>
<rect class="bx" x="1254" y="350" width="8" height="18.6"/>
<circle class="dot" cx="1316.9" cy="322" r=".7"/><circle class="dot" cx="1316.9" cy="360" r=".7"/><circle class="dot" cx="1388.9" cy="360" r=".7"/><circle class="dot" cx="1405.4" cy="360" r=".7"/><circle class="dot" cx="1388.9" cy="402.5" r=".7"/>
<text class="n" x="1395" y="359">PT100</text>
<g class="t"><text x="1346" y="272">+5VA</text><text x="1354" y="303">R63</text><text x="1354" y="307">4K7</text><text x="1320" y="335">U16</text><text x="1320" y="338.5">TVS_SMB</text><text x="1320" y="373">U17</text><text x="1320" y="376.5">TVS_SMB</text><text x="1313" y="353">GND</text><text x="1313" y="391">GND</text><text x="1287" y="377">GND</text><text x="1385" y="414">GND</text><text x="1358" y="353">R64</text><text x="1359" y="356.5">1K</text><text x="1257" y="344">J13</text><text x="1252" y="348">PCB_Wire_3</text><text x="1384" y="388" transform="rotate(-90 1384 388)">R65 DNP</text><text x="1400" y="386" transform="rotate(-90 1400 386)">C18 1u5</text><text x="1256" y="355">1</text><text x="1256" y="360.5">2</text><text x="1256" y="366">3</text></g>
<g fill="#0000c4" font-size="2.6"><text x="1257" y="410">-  100Ω à 0°C.</text><text x="1257" y="413.8">-  Measurement current: 1mA.</text><text x="1257" y="417.6">-  PT100 output voltage: 100mV.</text><text x="1257" y="421.4">-  Antialiasing filter at 1KHz: C = 1.6µF</text></g>
</g>

<!-- ================= Green LED ================= -->
<g>
<rect class="bx" x="1219.9" y="466.6" width="9.1" height="33.4"/>
<path class="c" d="M1212 471.5h8M1212 476h8M1212 480.8h8M1212 485.6h8M1212 490.3h8M1212 495h8"/>
<path class="w" d="M1210 461V490.3H1212M1210 471.5H1212M1210 480.8H1212M1212 476H1132.2V503M1212 485.6H1160.4V503M1212 495H1189V503M1132.2 533V548M1160.4 533V586M1189 533V626M1132.2 564V573M1160.4 602V611M1189 642V651
M1014 561.2H1053M1082 561.2H1124M1012 599H1057M1087 599H1152M1017 639.4H1063M1093 639.4H1181"/>
<use href="#pwr" x="1210" y="461"/>
<g class="c"><use href="#rv" x="1132.2" y="518.8"/><use href="#rv" x="1160.4" y="518.8"/><use href="#rv" x="1189" y="518.8"/><use href="#rh" x="1067.6" y="561.2"/><use href="#rh" x="1072" y="599"/><use href="#rh" x="1077.7" y="639.4"/></g>
<use href="#q" x="1132.2" y="556.3"/><use href="#q" x="1160.4" y="594"/><use href="#q" x="1189" y="634.6"/>
<use href="#gnd" x="1132.2" y="573"/><use href="#gnd" x="1160.4" y="611"/><use href="#gnd" x="1189" y="651"/>
<circle class="dot" cx="1210" cy="471.5" r=".7"/><circle class="dot" cx="1210" cy="480.8" r=".7"/>
<g class="n"><text x="1009" y="560.2">Alim_Vert</text><text x="1012" y="598">Alim_Orange</text><text x="1017" y="638.4">LTE_Vert</text></g>
<g class="t"><text x="1207" y="457">+5V</text><text x="1231" y="484">J16</text><text x="1231" y="488">PCB_Wire_6</text><text x="1135" y="519">R76</text><text x="1135" y="523">4K7</text><text x="1163" y="519">R77</text><text x="1163" y="523">4K7</text><text x="1192" y="519">R78</text><text x="1192" y="523">4K7</text><text x="1141" y="556">Transistor_N_SOT2231</text><text x="1141" y="560">Transistor_N_SOT223</text><text x="1169" y="594">Transistor_N_SOT2232</text><text x="1169" y="598">Transistor_N_SOT223</text><text x="1198" y="634">Transistor_N_SOT2233</text><text x="1198" y="638">Transistor_N_SOT223</text><text x="1128" y="580">GND</text><text x="1157" y="618">GND</text><text x="1185" y="658">GND</text><text x="1069" y="575" transform="rotate(-90 1069 575)">100 R72</text><text x="1074" y="613" transform="rotate(-90 1074 613)">100 R71</text><text x="1079" y="654" transform="rotate(-90 1079 654)">100 R70</text></g>
<g class="p"><text x="1213" y="471">1</text><text x="1213" y="475.5">2</text><text x="1213" y="480.3">3</text><text x="1213" y="485.1">4</text><text x="1213" y="489.8">5</text><text x="1213" y="494.5">6</text></g>
<g class="no"><text x="1018.6" y="658">Notes:</text><text x="1018.6" y="667">- Diode current 1mA,</text><text x="1018.6" y="676">- BP Debounce: 1.5K</text></g>
<rect class="bx" x="1435.5" y="469" width="9.2" height="33"/>
<path class="c" d="M1427 473.7h8.5M1427 478.6h8.5M1427 483.3h8.5M1427 488h8.5M1427 492.7h8.5M1427 497.4h8.5"/>
<path class="w" d="M1305 458V473.7H1427M1270 478.6H1305M1335 478.6H1427M1292.6 478.6V493.5M1292.6 505.5V517M1342.8 478.6V482M1342.8 512V524M1427 483.3H1354.5V539M1427 492.7H1371.3V539M1354.5 569V581M1371.3 569V616M1354.5 612V620M1371.3 648V655.4M1427 497.4H1403V488H1396V490M1403 497.4V506M1257.5 601.6H1284M1314 601.6H1346M1257.5 637H1300M1330 637H1363"/>
<use href="#pwr" x="1305" y="458"/><use href="#pwr" x="1396" y="498"/>
<use href="#cv" x="1292.6" y="499.5"/><use href="#gnd" x="1292.6" y="517"/><use href="#gnd" x="1342.8" y="524"/>
<g class="c"><use href="#rh" x="1319.8" y="478.6"/><use href="#rv" x="1342.8" y="497"/><use href="#rv" x="1354.5" y="554"/><use href="#rv" x="1371.3" y="554"/><use href="#rh" x="1298.6" y="601.6"/><use href="#rh" x="1314.6" y="637"/></g>
<use href="#q" x="1354.5" y="596.5"/><use href="#q" x="1371.3" y="632"/>
<use href="#gnd" x="1354.5" y="620"/><use href="#gnd" x="1371.3" y="655.4"/>
<circle class="dot" cx="1292.6" cy="478.6" r=".7"/><circle class="dot" cx="1342.8" cy="478.6" r=".7"/><circle class="dot" cx="1403" cy="497.4" r=".7"/>
<g class="n"><text x="1270" y="477.6">BP_LTE</text><text x="1257.5" y="600.6">Alim_Extern</text><text x="1257.5" y="636">LTE_Rouge</text></g>
<g class="t"><text x="1300" y="454">+3.3V</text><text x="1446" y="483">PCB_Wire_6</text><text x="1446" y="487">J18</text><text x="1296" y="499">C29</text><text x="1296" y="503">100n</text><text x="1289" y="525">GND</text><text x="1339" y="531">GND</text><text x="1346" y="497">R73</text><text x="1346" y="501">4K7</text><text x="1357" y="554">R75</text><text x="1357" y="558">4K7</text><text x="1374" y="554">R74</text><text x="1374" y="558">4K7</text><text x="1363" y="596">Transistor_N_SOT2234</text><text x="1363" y="600">Transistor_N_SOT223</text><text x="1380" y="632">Transistor_N_SOT2235</text><text x="1380" y="636">Transistor_N_SOT223</text><text x="1351" y="627">GND</text><text x="1368" y="662">GND</text><text x="1391" y="497">+5V</text><text x="1322" y="490" transform="rotate(-90 1322 490)">1K R85</text><text x="1300" y="615" transform="rotate(-90 1300 615)">100 R79</text><text x="1316" y="651" transform="rotate(-90 1316 651)">100 R80</text></g>
<g class="p"><text x="1428" y="473">6</text><text x="1428" y="478">5</text><text x="1428" y="482.7">4</text><text x="1428" y="487.4">3</text><text x="1428" y="492.1">2</text><text x="1428" y="496.8">1</text></g>
</g>

<!-- ================= Voltage ================= -->
<g>
<rect class="bx" x="80.7" y="774.7" width="18.8" height="28.3"/>
<path class="c" d="M99.5 779h5M99.5 783.9h5M99.5 788.6h5M99.5 793.4h5M99.5 798h5"/>
<path class="w" d="M104.5 779H109.3V772H121V773M104.5 783.9H135V739H146M104.5 788.6H135V817.3H146M104.5 793.4H130.2V890.6H146M104.5 798H125.3V961.6H146"/>
<use href="#gnd" x="121" y="773"/>
<g class="pa"><text x="82" y="780">5</text><text x="82" y="785">4</text><text x="82" y="790">3</text><text x="82" y="795">2</text><text x="82" y="800">1</text><text x="65" y="789">PhoenixSP508</text><text x="72" y="793">J4</text><text x="118" y="778">GND</text></g>
<g class="n" font-size="4"><text x="111" y="783">Ve4</text><text x="113" y="787.5">Ve3</text><text x="115" y="792.3">Ve2</text><text x="117" y="797">Ve1</text></g>
<g class="w">
<path d="M176 739H188.6M218.6 739H231.2M261.2 739H274M304 739H319M349 739H359M389 739H471.4M402.5 739V752.7M402.5 782.7V791M423.8 739V761.7M423.8 773.7V791M402.5 791H471.4M402.5 791V795"/>
<path d="M176 817.3H188.6M218.6 817.3H231.2M261.2 817.3H274M304 817.3H319M349 817.3H359M389 817.3H471.4M402.5 817.3V828M402.5 858V869M423.8 817.3V837M423.8 849V869M402.5 869H471.4M402.5 869V873"/>
<path d="M176 890.6H188.6M218.6 890.6H231.2M261.2 890.6H274M304 890.6H319M349 890.6H359M389 890.6H471.4M402.5 890.6V901.7M402.5 931.7V942.7M423.8 890.6V910.7M423.8 922.7V942.7M402.5 942.7H471.4M402.5 942.7V947"/>
<path d="M176 961.6H188.6M218.6 961.6H231.2M261.2 961.6H274M304 961.6H319M349 961.6H359M389 961.6H471.4M402.5 961.6V972.7M402.5 1002.7V1013.7M423.8 961.6V981.7M423.8 993.7V1013.7M402.5 1013.7H471.4M402.5 1013.7V1018"/>
</g>
<g class="c">
<use href="#rh" x="160.9" y="739"/><use href="#rh" x="203.6" y="739"/><use href="#rh" x="246.2" y="739"/><use href="#rh" x="289" y="739"/><use href="#rh" x="334" y="739"/><use href="#rh" x="374" y="739"/>
<use href="#rh" x="160.9" y="817.3"/><use href="#rh" x="203.6" y="817.3"/><use href="#rh" x="246.2" y="817.3"/><use href="#rh" x="289" y="817.3"/><use href="#rh" x="334" y="817.3"/><use href="#rh" x="374" y="817.3"/>
<use href="#rh" x="160.9" y="890.6"/><use href="#rh" x="203.6" y="890.6"/><use href="#rh" x="246.2" y="890.6"/><use href="#rh" x="289" y="890.6"/><use href="#rh" x="334" y="890.6"/><use href="#rh" x="374" y="890.6"/>
<use href="#rh" x="160.9" y="961.6"/><use href="#rh" x="203.6" y="961.6"/><use href="#rh" x="246.2" y="961.6"/><use href="#rh" x="289" y="961.6"/><use href="#rh" x="334" y="961.6"/><use href="#rh" x="374" y="961.6"/>
<use href="#rv" x="402.5" y="767.7"/><use href="#rv" x="402.5" y="843"/><use href="#rv" x="402.5" y="916.7"/><use href="#rv" x="402.5" y="987.7"/>
</g>
<use href="#cv" x="423.8" y="767.7"/><use href="#cv" x="423.8" y="843"/><use href="#cv" x="423.8" y="916.7"/><use href="#cv" x="423.8" y="987.7"/>
<use href="#gnd" x="402.5" y="795"/><use href="#gnd" x="402.5" y="873"/><use href="#gnd" x="402.5" y="947"/><use href="#gnd" x="402.5" y="1018"/>
<g class="dot"><circle cx="402.5" cy="739" r=".7"/><circle cx="423.8" cy="739" r=".7"/><circle cx="402.5" cy="791" r=".7"/><circle cx="423.8" cy="791" r=".7"/><circle cx="402.5" cy="817.3" r=".7"/><circle cx="423.8" cy="817.3" r=".7"/><circle cx="402.5" cy="869" r=".7"/><circle cx="423.8" cy="869" r=".7"/><circle cx="402.5" cy="890.6" r=".7"/><circle cx="423.8" cy="890.6" r=".7"/><circle cx="402.5" cy="942.7" r=".7"/><circle cx="423.8" cy="942.7" r=".7"/><circle cx="402.5" cy="961.6" r=".7"/><circle cx="423.8" cy="961.6" r=".7"/><circle cx="402.5" cy="1013.7" r=".7"/><circle cx="423.8" cy="1013.7" r=".7"/></g>
<g class="n" font-size="3.8"><text x="446" y="738">Vm4+</text><text x="445" y="790">Vm4-</text><text x="445" y="816.3">Vm3+</text><text x="445" y="868">Vm3-</text><text x="445" y="889.6">Vm2+</text><text x="447" y="941.7">Vm2-</text><text x="443" y="960.6">Vm1+</text><text x="445" y="1012.7">Vm1-</text></g>
<g class="t" text-anchor="middle" font-size="2.3">
<text x="160.9" y="731.5">R2</text><text x="160.9" y="734.5">500K</text><text x="203.6" y="731.5">R6</text><text x="203.6" y="734.5">500K</text><text x="246.2" y="731.5">R10</text><text x="246.2" y="734.5">500K</text><text x="289" y="731.5">R14</text><text x="289" y="734.5">500K</text><text x="334" y="731.5">R18</text><text x="334" y="734.5">500K</text><text x="374" y="731.5">R22</text><text x="374" y="734.5">500K</text>
<text x="160.9" y="809.8">R3</text><text x="160.9" y="812.8">500K</text><text x="203.6" y="809.8">R7</text><text x="203.6" y="812.8">500K</text><text x="246.2" y="809.8">R11</text><text x="246.2" y="812.8">500K</text><text x="289" y="809.8">R15</text><text x="289" y="812.8">500K</text><text x="334" y="809.8">R19</text><text x="334" y="812.8">500K</text><text x="374" y="809.8">R23</text><text x="374" y="812.8">500K</text>
<text x="160.9" y="883.1">R4</text><text x="160.9" y="886.1">500K</text><text x="203.6" y="883.1">R8</text><text x="203.6" y="886.1">500K</text><text x="246.2" y="883.1">R12</text><text x="246.2" y="886.1">500K</text><text x="289" y="883.1">R16</text><text x="289" y="886.1">500K</text><text x="334" y="883.1">R20</text><text x="334" y="886.1">500K</text><text x="374" y="883.1">R24</text><text x="374" y="886.1">500K</text>
<text x="160.9" y="954.1">R5</text><text x="160.9" y="957.1">500K</text><text x="203.6" y="954.1">R9</text><text x="203.6" y="957.1">500K</text><text x="246.2" y="954.1">R13</text><text x="246.2" y="957.1">500K</text><text x="289" y="954.1">R17</text><text x="289" y="957.1">500K</text><text x="334" y="954.1">R21</text><text x="334" y="957.1">500K</text><text x="374" y="954.1">R25</text><text x="374" y="957.1">500K</text>
<text x="402.5" y="802">GND</text><text x="402.5" y="880">GND</text><text x="402.5" y="954">GND</text><text x="402.5" y="1025">GND</text></g>
<g class="t" font-size="2.3"><text x="394" y="773" transform="rotate(-90 394 773)">R36 4K7</text><text x="415" y="772" transform="rotate(-90 415 772)">C8 22n</text><text x="394" y="848" transform="rotate(-90 394 848)">R35 4K7</text><text x="415" y="847" transform="rotate(-90 415 847)">C7 22n</text><text x="394" y="922" transform="rotate(-90 394 922)">R34 4K7</text><text x="415" y="921" transform="rotate(-90 415 921)">C6 22n</text><text x="394" y="993" transform="rotate(-90 394 993)">R33 4K7</text><text x="415" y="992" transform="rotate(-90 415 992)">C5 22n</text></g>
<g class="no"><text x="86.2" y="983">Notes:</text><text x="86.2" y="992">- Rated voltages :  480Vll, 277Vln</text><text x="86.2" y="1001">- Reinforced insulation,</text><text x="86.2" y="1010">- clearance: 5.5mm</text><text x="86.2" y="1019">- Route Vmx+/- as differential pairs,</text><text x="86.2" y="1028">- ADC differential input designed for:</text><text x="108" y="1037">+ 480VL-GND + 10% margin,</text><text x="108" y="1046">+ max input ADC: 1V (&lt;Vref x 0.95, PGA = 1),</text><text x="86.2" y="1055">- Nequiste freq = 1.5kHz (&lt;0.5*4kHz VSF freq)</text><text x="94" y="1064">this would drive C = 17nF.</text></g>
</g>

<!-- ================= Current ================= -->
<use href="#cb1"/>
<use href="#cb1" transform="translate(5 61.7)"/><use href="#cb1" transform="translate(5 121.1)"/><use href="#cb1" transform="translate(3 180.3)"/>
<g class="n" font-size="4"><text x="589.6" y="745.8">Ie1</text><text x="596" y="807.5">Ie2</text><text x="596" y="866.9">Ie3</text><text x="593" y="926">Ie4</text>
<text x="725.3" y="742.5">Im1+</text><text x="725.3" y="785.3">Im1-</text><text x="730" y="804.2">Im2+</text><text x="725.3" y="845.8">Im2-</text><text x="730" y="863.6">Im3+</text><text x="730" y="906">Im3-</text><text x="725.3" y="922.8">Im4+</text><text x="725.3" y="965.2">Im4-</text></g>
<g class="t" font-size="2.3">
<text x="568" y="739">J2</text><text x="558" y="742.5">Conn_SMA_Droit</text><text x="629" y="746.5">U4</text><text x="629" y="749.5">TVS_SMB</text><text x="667" y="737">R1</text><text x="668" y="740">1K</text><text x="576" y="767">GND</text>
<text x="574" y="800.7">J3</text><text x="564" y="804.2">Conn_SMA_Droit</text><text x="634" y="808.2">U5</text><text x="634" y="811.2">TVS_SMB</text><text x="672" y="798.7">R27</text><text x="673" y="801.7">1K</text><text x="580" y="828.7">GND</text><text x="588" y="828.7">PWR_FLAG</text>
<text x="574" y="860.1">J5</text><text x="564" y="863.6">Conn_SMA_Droit</text><text x="634" y="867.6">U6</text><text x="634" y="870.6">TVS_SMB</text><text x="672" y="858.1">R29</text><text x="673" y="861.1">1K</text><text x="580" y="888">GND</text>
<text x="570" y="919.3">J6</text><text x="560" y="922.8">Conn_SMA_Droit</text><text x="632" y="926.8">U7</text><text x="632" y="929.8">TVS_SMB</text><text x="670" y="917.3">R31</text><text x="671" y="920.3">1K</text><text x="578" y="947.3">GND</text>
<text x="686" y="770" transform="rotate(-90 686 770)">R26 DNP</text><text x="704" y="769" transform="rotate(-90 704 769)">C2 100n</text>
<text x="691" y="831.7" transform="rotate(-90 691 831.7)">R28 DNP</text><text x="709" y="830.7" transform="rotate(-90 709 830.7)">C1 100n</text>
<text x="691" y="891.1" transform="rotate(-90 691 891.1)">R30 DNP</text><text x="709" y="890.1" transform="rotate(-90 709 890.1)">C3 100n</text>
<text x="689" y="950.3" transform="rotate(-90 689 950.3)">R32 DNP</text><text x="707" y="949.3" transform="rotate(-90 707 949.3)">C4 100n</text></g>
<path class="c" d="M591 822v-2l1.2-1.5 1.2 1.5-1.2 1.5"/>
<g class="no" style="font-family:'Liberation Mono',monospace" font-size="7.6"><text x="531.5" y="968">Notes:</text><text x="531.5" y="977.3">- route Imx+/- signals as diff pairs,</text><text x="531.5" y="986.3">- Designed for 100mA max Rogowski sensor,</text><text x="531.5" y="995.3">- Nequist Freq = 1.5KHz</text></g>

<!-- ================= Vibration ================= -->
<g>
<path class="w" d="M854.7 748V758.2H887M898 758.2H911V748M871.7 758.2V763M871.7 776V789"/>
<use href="#pwr" x="854.7" y="748"/><use href="#pwr" x="911" y="748"/><use href="#cv" x="871.7" y="769.4"/><use href="#gnd" x="871.7" y="789"/>
<path class="c" d="M887 758.2l5-6 6 6-5 6zM889 762l6-8"/>
<circle class="dot" cx="871.7" cy="758.2" r=".7"/>
<g class="t" font-size="2.3"><text x="888" y="749">FB1</text><text x="879" y="752.5">Ferrite_0805</text><text x="850" y="745">-5VA</text><text x="908" y="745">+5V</text><text x="874" y="769">C9</text><text x="874" y="772.5">10u</text><text x="868" y="797">GND</text></g>
</g>
<use href="#vrow" transform="translate(0 760.2)"/>
<use href="#vrow" transform="translate(0 831.3)"/><use href="#vrow" transform="translate(0 892.8)"/><use href="#vrow" transform="translate(0 957)"/>
<use href="#vrow" transform="translate(284.2 767.2)"/><use href="#vrow" transform="translate(284.2 838.4)"/><use href="#vrow" transform="translate(284.2 900)"/><use href="#vrow" transform="translate(284.2 964.2)"/>
<g class="n" font-size="4"><text x="1045" y="759">Vib1_Z_m</text><text x="1045" y="830">Vib1_Y_m</text><text x="1047" y="891.6">Vib1_X_m</text><text x="1047" y="955.8">Vib1_Comm</text><text x="1329" y="766">Vib2_Z_m</text><text x="1329" y="837.2">Vib2_Y_m</text><text x="1331" y="898.8">Vib2_X_m</text><text x="1331" y="963">Vib2_Comm</text></g>
<rect class="bx" x="854.7" y="822" width="9.3" height="32.7"/>
<path class="c" d="M864 825.5h5M864 830.4h5M864 835.4h5M864 840h5M864 845h5M864 850h5"/>
<path class="w" d="M869 825.5H933.4M869 831.3H933.4M869 835.4H907V814M869 840H930V892.8H933.4M869 845H920.6V957H933.4M869 850H902.3V860"/>
<use href="#pwr" x="907" y="814"/><use href="#gnd" x="902.3" y="860"/>
<g class="n" font-size="3.8"><text x="876.8" y="824.5">Vib1_Z_e</text><text x="876.8" y="829.4">Vib1_Y_e</text><text x="876.8" y="839">Vib1_X_e</text><text x="876.8" y="844">Comm1</text><text x="876.8" y="849">Exc1-</text></g>
<g class="t" font-size="2.3"><text x="834" y="837">PCB_Wire_6</text><text x="847" y="841">J11</text><text x="903" y="811">-5VA</text><text x="898" y="868">GND</text></g>
<rect class="bx" x="1139.3" y="829" width="9.4" height="33"/>
<path class="c" d="M1148.7 832.7h5M1148.7 837.6h5M1148.7 842.6h5M1148.7 847.5h5M1148.7 852.5h5M1148.7 857.4h5"/>
<path class="w" d="M1153.7 832.7H1217.5M1153.7 838.4H1217.5M1153.7 842.6H1191.7V821M1153.7 847.5H1215.2V900H1217.5M1153.7 852.5H1205.3V964.2H1217.5M1153.7 857.4H1186.9V868"/>
<use href="#pwr" x="1191.7" y="821"/><use href="#gnd" x="1186.9" y="868"/>
<g class="n" font-size="3.8"><text x="1160" y="831.7">Vib2_Z_e</text><text x="1160" y="837">Vib2_Y_e</text><text x="1160" y="846.5">Vib2_X_e</text><text x="1160" y="851.5">Comm2</text><text x="1160" y="856.4">Exc2-</text></g>
<g class="t" font-size="2.3"><text x="1118" y="844">PCB_Wire_6</text><text x="1132" y="848">J10</text><text x="1187" y="818">-5VA</text><text x="1183" y="876">GND</text></g>
<g class="no" font-size="8.2"><text x="836.8" y="1026">Notes:</text><text x="836.8" y="1035">- To do, provide a ground plan of the shielding.</text><text x="836.8" y="1044">- The accelerometer will output signals between 0 and 5V.</text><text x="836.8" y="1053">- The input filters will have a gain of 1/10 (to have ADC inputs at 0.5V): R1/R2 = 1KΩ/100Ω.</text><text x="836.8" y="1062">- The Antialiasing filter will be positioned at 1KHz: C = 1.6µF (1.5µF)</text></g>

<!-- title block -->
<g class="bd" stroke-width=".5">
<path d="M1344.8 1025.6H1546M1344.8 1025.6V1085M1344.8 1054.7H1546M1344.8 1065.8H1546M1344.8 1073.2H1546M1344.8 1078.9H1546M1382 1073.2V1078.9M1501.3 1073.2V1085"/>
</g>
<g fill="#840000" font-family="Liberation Mono,monospace">
<text x="1346.9" y="1052.6" font-size="3.2" font-weight="bold">Schneider</text>
<text x="1346.9" y="1058.6" font-size="3.2">Sheet: /</text>
<text x="1346.9" y="1063.6" font-size="3.2">File: Valise.kicad_sch</text>
<text x="1346.9" y="1071" font-size="4.4" font-weight="bold" font-style="italic">Title: Valise de mesure</text>
<text x="1346.9" y="1077.5" font-size="3.2">Size: A1</text>
<text x="1388" y="1077.5" font-size="3.2">Date: 2022-12-05</text>
<text x="1503" y="1077.5" font-size="3.2" font-weight="bold">Rev: 0</text>
<text x="1346.9" y="1083.3" font-size="3.2">KiCad E.D.A.  kicad (6.0.11)</text>
<text x="1503" y="1083.3" font-size="3.2">Id: 1/1</text>
</g>
</svg>
</body></html>
